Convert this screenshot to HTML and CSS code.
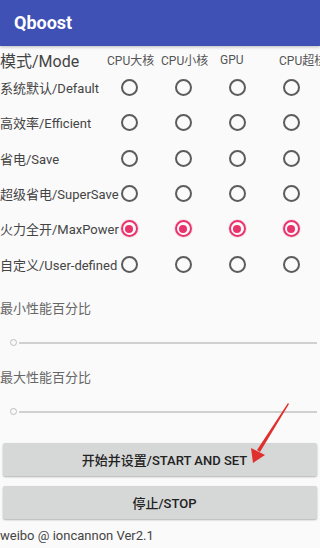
FILE: index.html
```
<!DOCTYPE html>
<html>
<head>
<meta charset="utf-8">
<link rel="stylesheet" href="styles.css">
</head>
<body>
<div class="app">
  <header class="bar"><span class="title">Qboost</span></header>
  <div class="table">
    <div class="hcell mode">模式/Mode</div>
    <div class="hcell c1">CPU大核</div>
    <div class="hcell c2">CPU小核</div>
    <div class="hcell c3">GPU</div>
    <div class="hcell c4">CPU超核</div>

    <div class="label">系统默认/Default</div>
    <div class="cell"><span class="radio"></span></div>
    <div class="cell"><span class="radio"></span></div>
    <div class="cell"><span class="radio"></span></div>
    <div class="cell"><span class="radio"></span></div>

    <div class="label">高效率/Efficient</div>
    <div class="cell"><span class="radio"></span></div>
    <div class="cell"><span class="radio"></span></div>
    <div class="cell"><span class="radio"></span></div>
    <div class="cell"><span class="radio"></span></div>

    <div class="label">省电/Save</div>
    <div class="cell"><span class="radio"></span></div>
    <div class="cell"><span class="radio"></span></div>
    <div class="cell"><span class="radio"></span></div>
    <div class="cell"><span class="radio"></span></div>

    <div class="label">超级省电/SuperSave</div>
    <div class="cell"><span class="radio"></span></div>
    <div class="cell"><span class="radio"></span></div>
    <div class="cell"><span class="radio"></span></div>
    <div class="cell"><span class="radio"></span></div>

    <div class="label">火力全开/MaxPower</div>
    <div class="cell"><span class="radio on"></span></div>
    <div class="cell"><span class="radio on"></span></div>
    <div class="cell"><span class="radio on"></span></div>
    <div class="cell"><span class="radio on"></span></div>

    <div class="label">自定义/User-defined</div>
    <div class="cell"><span class="radio"></span></div>
    <div class="cell"><span class="radio"></span></div>
    <div class="cell"><span class="radio"></span></div>
    <div class="cell"><span class="radio"></span></div>
  </div>

  <section class="slider-block first">
    <div class="slabel">最小性能百分比</div>
    <div class="slider"><span class="thumb"></span><span class="track"></span></div>
  </section>
  <section class="slider-block">
    <div class="slabel">最大性能百分比</div>
    <div class="slider"><span class="thumb"></span><span class="track"></span></div>
  </section>

  <div class="buttons">
    <button class="btn">开始并设置/START AND SET</button>
    <button class="btn">停止/STOP</button>
  </div>
  <div class="footer">weibo @ ioncannon Ver2.1</div>

  <svg class="arrow" width="320" height="548" viewBox="0 0 320 548">
    <polygon points="288,403 289,404 260,452 257,450" fill="#e0302e"/>
    <polygon points="253,463 251,448 265,455" fill="#e0302e"/>
  </svg>
</div>
</body>
</html>
```
FILE: styles.css
```
html, body {
  margin: 0;
  padding: 0;
  background: #fafafa;
}
body {
  width: 320px;
  height: 548px;
  overflow: hidden;
  font-family: Roboto, "Noto Sans CJK SC", sans-serif;
  color: #444;
}
.app {
  position: relative;
  width: 320px;
  height: 548px;
}
.bar {
  height: 46px;
  background: #3f51b5;
  display: flex;
  align-items: center;
  padding-left: 14px;
  box-shadow: 0 1px 3px rgba(0,0,0,0.25);
}
.title {
  color: #fff;
  font-size: 18px;
  font-weight: bold;
  line-height: 1;
}
.table {
  display: grid;
  grid-template-columns: 102px 54px 54px 54px 54px;
  grid-template-rows: 24px repeat(6, 35.3px);
  white-space: nowrap;
}
.hcell {
  display: flex;
  align-items: center;
  font-size: 12px;
  color: #555;
  overflow: visible;
  padding-top: 3px;
}
.hcell.mode {
  font-size: 16px;
  color: #444;
}
.hcell.c1 { padding-left: 5px; }
.hcell.c2 { padding-left: 5px; }
.hcell.c3 { padding-left: 10px; }
.hcell.c4 { padding-left: 15px; }
.label {
  display: flex;
  align-items: center;
  font-size: 13px;
  color: #444;
  overflow: visible;
}
.cell {
  display: flex;
  align-items: center;
  justify-content: center;
}
.radio {
  box-sizing: border-box;
  width: 17px;
  height: 17px;
  border: 2px solid #5c5c5c;
  border-radius: 50%;
  display: flex;
  align-items: center;
  justify-content: center;
}
.radio.on {
  border-color: #e8336d;
  box-shadow: 0 0 0 1px rgba(232, 51, 109, 0.12);
}
.radio.on::after {
  content: "";
  width: 8px;
  height: 8px;
  border-radius: 50%;
  background: #e8336d;
}
.slider-block {
  display: flex;
  flex-direction: column;
}
.slider-block.first {
  margin-top: 18px;
}
.slider-block + .slider-block {
  margin-top: 20px;
}
.slabel {
  font-size: 13px;
  color: #666;
  line-height: 18px;
}
.slider {
  display: flex;
  align-items: center;
  height: 12px;
  margin-top: 19px;
  padding-left: 10px;
  padding-right: 3px;
}
.thumb {
  box-sizing: border-box;
  width: 7px;
  height: 7px;
  border: 1.5px solid #bdbdbd;
  border-radius: 50%;
  flex: none;
}
.track {
  flex: 1;
  height: 2px;
  background: #d0d0d0;
  margin-left: 2px;
}
.buttons {
  display: flex;
  flex-direction: column;
  gap: 10px;
  padding: 0 3px;
  margin-top: 25px;
}
.btn {
  height: 33px;
  border: none;
  border-radius: 2px;
  background: #d6d7d7;
  box-shadow: 0 1px 2px rgba(0,0,0,0.3);
  font-family: Roboto, "Noto Sans CJK SC", sans-serif;
  font-size: 13px;
  font-weight: 500;
  color: #222;
  padding: 0 0 0 9px;
  text-align: center;
}
.footer {
  font-size: 13px;
  color: #444;
  margin-top: 9px;
  line-height: 16px;
}
.arrow {
  position: absolute;
  left: 0;
  top: 0;
  pointer-events: none;
}
```
